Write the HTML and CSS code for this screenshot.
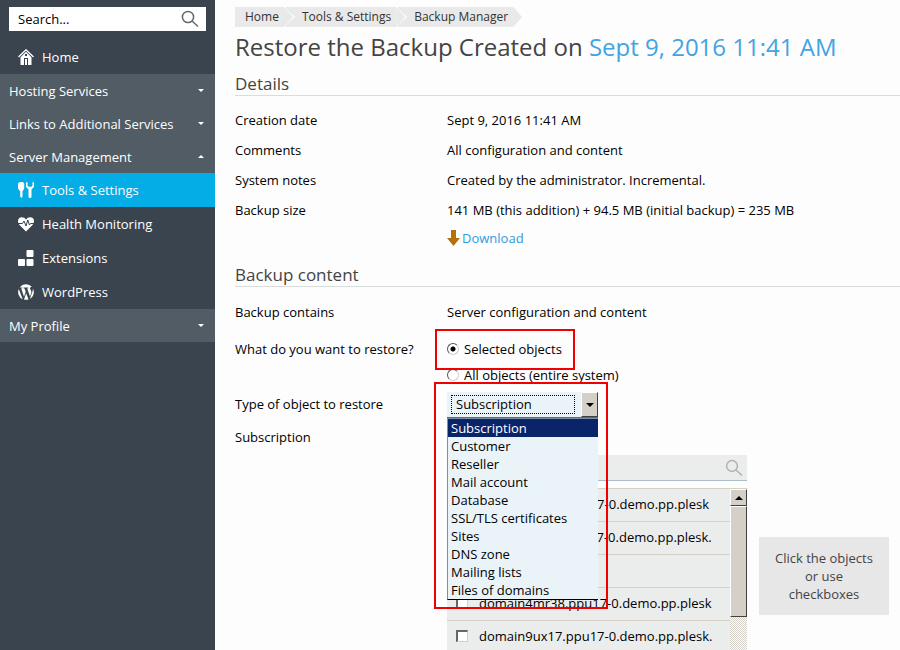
FILE: index.html
```html
<!DOCTYPE html>
<html lang="en">
<head>
    <meta charset="UTF-8">
    <meta name="viewport" content="width=device-width, initial-scale=1.0">
    <title>Restore the Backup</title>
    <link rel="stylesheet" href="styles.css">
</head>
<body>
    <aside class="sidebar">
        <form class="search">
            <input type="text" placeholder="Search..." aria-label="Search">
            <button type="button" aria-label="Find">
                <svg width="18" height="18" viewBox="0 0 18 18"><circle cx="7" cy="7" r="5.6"/><path d="M11 11l6 5.500"/></svg>
            </button>
        </form>
        <nav>
            <a class="item" href="#">
                <svg width="16" height="16" viewBox="0 0 16 16"><path d="M0.500 8L8 0.800 15.500 8" fill="none" stroke="#fff" stroke-width="1.300"/><path fill-rule="evenodd" d="M8 2.800l5.500 5.400V16H10V9H6v7H2.500V8.200zM7 5v2h2V5z"/><path d="M7 10h2v6H7z"/></svg>
                Home
            </a>
            <button class="group" type="button">Hosting Services <span class="caret"></span></button>
            <button class="group" type="button">Links to Additional Services <span class="caret"></span></button>
            <button class="group" type="button">Server Management <span class="caret up"></span></button>
            <a class="item active" href="#">
                <svg width="16" height="16" viewBox="0 0 16 16"><path d="M1.500 0h3.500l1.200 1.500v5L4.800 9h-.3v5.500L3.300 16 2.200 14.500V9h-.4L0 6.500v-5z"/><path d="M8 0.500v4.200L10.500 7.500v7q0 1.500 1.500 1.500t1.500-1.500v-7L16 4.700V0.500L14.500 0v3.800l-1.200 1h-2.600l-1.200-1V0z"/></svg>
                Tools &amp; Settings
            </a>
            <a class="item" href="#">
                <svg width="16" height="16" viewBox="0 0 16 16"><path d="M8 15.500L1.500 9Q0 7.300 0 5.200 0 1.200 4 1.200q2.500 0 4 2.300 1.500-2.300 4-2.300 4 0 4 4 0 2.100-1.500 3.800z"/><path d="M0 7.500h4.500l1.500-2.500 2 5 1.800-6 1.700 5 1-1.500H16" fill="none" stroke="#39444f"/></svg>
                Health Monitoring
            </a>
            <a class="item" href="#">
                <svg width="16" height="16" viewBox="0 0 16 16"><rect x="8.500" width="7" height="7" rx="1"/><rect y="9" width="7" height="7" rx="1"/><rect x="8.500" y="9" width="7" height="7" rx="1"/></svg>
                Extensions
            </a>
            <a class="item" href="#">
                <svg width="16" height="16" viewBox="0 0 16 16"><path d="M1.700 3.500A8 8 0 0 1 14 3h-1q-1.200.3-1 1.500.2 1 1 2 .7 1.300 0 3.300L12 12.500 9.200 4.500l1-.2v-.9H5.500v.9l1 .2 1.200 3.200-1.700 5L3.200 4.500l1-.2v-.8z"/><path d="M0.800 5l3.900 10.300A8 8 0 0 1 0.800 5zM8.200 9.200l2.300 6.300a8 8 0 0 1-4.500 0zM14.900 4.500a8 8 0 0 1-3.100 10.600l2.500-7q.7-2 .6-3.600z"/></svg>
                WordPress
            </a>
            <button class="group" type="button">My Profile <span class="caret"></span></button>
        </nav>
    </aside>

    <main>
        <nav class="breadcrumbs">
            <a href="#">Home</a>
            <a href="#">Tools &amp; Settings</a>
            <a href="#">Backup Manager</a>
        </nav>
        <h1>Restore the Backup Created on <span>Sept 9, 2016 11:41 AM</span></h1>

        <h2>Details</h2>
        <dl class="details">
            <dt>Creation date</dt><dd>Sept 9, 2016 11:41 AM</dd>
            <dt>Comments</dt><dd>All configuration and content</dd>
            <dt>System notes</dt><dd>Created by the administrator. Incremental.</dd>
            <dt>Backup size</dt><dd>141 MB (this addition) + 94.5 MB (initial backup) = 235 MB
                <a class="download" href="#"><svg width="13" height="16" viewBox="0 0 13 16"><path d="M4 0h5v8h4l-6.500 8L0 8h4z"/></svg>Download</a>
            </dd>
        </dl>

        <h2>Backup content</h2>
        <form class="content">
            <div class="row">
                <span class="name">Backup contains</span>
                <span>Server configuration and content</span>
            </div>
            <div class="row restore">
                <span class="name" id="what">What do you want to restore?</span>
                <div class="radios" role="radiogroup" aria-labelledby="what">
                    <label class="marked"><input type="radio" name="objects" checked> Selected objects</label>
                    <label><input type="radio" name="objects"> All objects (entire system)</label>
                </div>
            </div>
            <div class="row type">
                <label class="name" for="type">Type of object to restore</label>
                <div class="combo">
                    <select id="type"><option>Subscription</option></select>
                    <span class="arrow"></span>
                    <ul class="options" role="listbox" aria-label="Object types">
                        <li role="option" aria-selected="true">Subscription</li>
                        <li role="option">Customer</li>
                        <li role="option">Reseller</li>
                        <li role="option">Mail account</li>
                        <li role="option">Database</li>
                        <li role="option">SSL/TLS certificates</li>
                        <li role="option">Sites</li>
                        <li role="option">DNS zone</li>
                        <li role="option">Mailing lists</li>
                        <li role="option">Files of domains</li>
                    </ul>
                    <div class="frame"></div>
                </div>
            </div>
            <div class="row subscription">
                <span class="name">Subscription</span>
                <div class="picker">
                    <div class="objects">
                        <div class="filter">
                            <input type="text" aria-label="Filter subscriptions">
                            <svg width="18" height="18" viewBox="0 0 18 18"><circle cx="7" cy="7" r="5.400"/><path d="M11 11l6 5.500"/></svg>
                        </div>
                        <div class="list">
                            <ul>
                                <li><label><input type="checkbox"> domain2kd45.ppu17-0.demo.pp.plesk</label></li>
                                <li><label><input type="checkbox"> domain3hs61.ppu17-0.demo.pp.plesk.</label></li>
                                <li><input type="checkbox" aria-label="Domain"></li>
                                <li><label><input type="checkbox"> domain4mr38.ppu17-0.demo.pp.plesk</label></li>
                                <li><label><input type="checkbox"> domain9ux17.ppu17-0.demo.pp.plesk.</label></li>
                            </ul>
                            <div class="scrollbar">
                                <button type="button" aria-label="Scroll up"></button>
                                <div class="thumb"></div>
                            </div>
                        </div>
                    </div>
                    <p class="hint">Click the objects or use checkboxes</p>
                </div>
            </div>
        </form>
    </main>
</body>
</html>
```

FILE: styles.css
```css
* {
    box-sizing: border-box;
}
body {
    display: flex;
    height: 100vh;
    margin: 0;
    overflow: hidden;
    background-color: #fdfdfd;
    color: #000;
    font-family: "Open Sans", "Noto Sans", sans-serif;
    font-size: 13px;
    line-height: 18px;
}
a {
    text-decoration: none;
}
ul, dl, dd, p {
    margin: 0;
    padding: 0;
}
ul {
    list-style: none;
}
input, select, button {
    margin: 0;
    border: none;
    border-radius: 0;
    background: none;
    color: inherit;
    font: inherit;
}

/* sidebar */
.sidebar {
    flex: 0 0 215px;
    min-width: 0;
    padding-top: 7px;
    background-color: #39444f;
    color: #fff;
}
.search {
    display: flex;
    align-items: center;
    height: 24px;
    margin: 0 9px 9px;
    background-color: #fff;
}
.search input {
    flex: 1;
    min-width: 0;
    padding: 0 9px;
    color: #000;
}
.search input::placeholder {
    color: #000;
    opacity: 1;
}
.search button {
    display: flex;
    padding: 0 7px;
}
.search svg, .filter svg {
    fill: none;
    stroke: #666;
    stroke-width: 1.5;
}
.item {
    display: flex;
    align-items: center;
    gap: 8px;
    height: 34px;
    padding-left: 18px;
    color: #fff;
}
.item svg {
    fill: #fff;
}
.active {
    background-color: #04ade6;
}
.group {
    display: flex;
    align-items: center;
    justify-content: space-between;
    width: 100%;
    height: 33px;
    padding: 0 11px 0 9px;
    background-color: #525c64;
}
.caret {
    border: 3px solid transparent;
    border-top-color: #fff;
    border-bottom: none;
}
.caret.up {
    border-top: none;
    border-bottom: 3px solid #fff;
}

/* page */
main {
    flex: 1;
    min-width: 0;
    padding: 7px 0 0 20px;
    overflow: hidden;
}
.breadcrumbs {
    display: flex;
    gap: 2px;
    font-size: 12px;
    line-height: 20px;
}
.breadcrumbs a {
    position: relative;
    padding: 0 5px 0 16px;
    background-color: #e9e9e9;
    color: #333;
}
.breadcrumbs a:first-child {
    padding-left: 10px;
}
.breadcrumbs a::before, .breadcrumbs a::after {
    content: "";
    position: absolute;
    z-index: 1;
    top: 0;
    left: 100%;
    width: 11px;
    height: 20px;
    background-color: #fdfdfd;
    clip-path: polygon(0 0, 100% 50%, 0 100%);
}
.breadcrumbs a::after {
    width: 9px;
    background-color: #e9e9e9;
}
h1, h2 {
    margin: 0;
    color: #444;
    font-weight: 400;
}
h1 {
    margin-top: 3px;
    font-size: 24px;
    line-height: 34px;
    white-space: nowrap;
}
h1 span {
    color: #42a4e2;
}
h2 {
    margin-top: 8px;
    border-bottom: 1px solid #d9dcdd;
    font-size: 17px;
    line-height: 23px;
}
.details {
    display: grid;
    grid-template-columns: 212px 1fr;
    row-gap: 12px;
    padding-top: 15px;
}
.download {
    display: flex;
    align-items: center;
    gap: 2px;
    margin-top: 10px;
    color: #2f9bdc;
}
.download svg {
    fill: #b5700c;
}
.details + h2 {
    margin-top: 16px;
}
.row {
    display: flex;
    padding-top: 16px;
}
.name {
    flex: 0 0 212px;
}
.restore {
    padding-top: 19px;
}
.radios {
    display: flex;
    flex-direction: column;
    align-items: flex-start;
    gap: 8px;
}
.radios label {
    display: flex;
    align-items: center;
    gap: 5px;
}
.radios input {
    appearance: none;
    width: 12px;
    height: 12px;
    border: 1px solid;
    border-color: #555 #d4d0c8 #d4d0c8 #555;
    border-radius: 50%;
    background-color: #fff;
}
.radios input:checked {
    background-image: radial-gradient(#000 2px, transparent 3px);
}
.marked {
    position: relative;
}
.marked::after {
    content: "";
    position: absolute;
    inset: -11px -13px -12px -12px;
    border: 2px solid #f00000;
}
.type {
    padding-top: 8px;
}
.type .name {
    padding-top: 3px;
}
.combo {
    position: relative;
    display: flex;
    width: 151px;
    height: 26px;
    border-bottom: 1px solid #2a7ab0;
    background-color: #eaf4f8;
}
.combo select {
    appearance: none;
    flex: 1;
    height: 19px;
    margin: 3px 6px 3px 4px;
    padding: 0 4px;
    border: 1px dotted #000;
    line-height: 17px;
}
.arrow {
    display: flex;
    align-items: center;
    justify-content: center;
    width: 17px;
    border: 1px solid;
    border-color: #fff #404040 #404040 #fff;
    background-color: #d4d0c8;
}
.arrow::before {
    content: "";
    border: 4px solid transparent;
    border-top-color: #000;
    border-bottom: none;
}
.options {
    position: absolute;
    z-index: 2;
    top: 26px;
    left: 0;
    width: 100%;
    border: 1px solid #000;
    border-width: 1px 0 1px 1px;
    border-top-color: #7d8fa3;
    border-left-color: #7d8fa3;
    background-color: #eaf4f8;
}
.options li {
    padding-left: 3px;
}
.options [aria-selected] {
    background-color: #0a246a;
    color: #fff;
}
.frame {
    position: absolute;
    z-index: 3;
    inset: -10px -10px -192px -13px;
    border: 2px solid #f00000;
}
.subscription {
    padding-top: 10px;
}
.picker {
    display: flex;
    align-items: center;
    gap: 12px;
    margin-top: 27px;
}
.objects {
    flex: 0 0 300px;
}
.filter {
    display: flex;
    align-items: center;
    height: 26px;
    padding-right: 4px;
    border-bottom: 1px solid #adbccb;
    background-color: #ebeded;
}
.filter input {
    flex: 1;
    min-width: 0;
}
.filter svg {
    stroke: #b0b0b0;
}
.list {
    display: flex;
    height: 208px;
    margin-top: 7px;
    border-top: 1px solid #d4d0c8;
    background-color: #ebeded;
}
.list ul {
    flex: 1;
}
.list li, .list label {
    display: flex;
    align-items: center;
}
.list li {
    height: 33px;
    padding: 0 0 3px 9px;
    border-bottom: 1px solid #d4d0c8;
}
.list label {
    gap: 11px;
}
.list input {
    appearance: none;
    width: 12px;
    height: 12px;
    border: 1px solid #d4d0c8;
    border-top: 2px solid #666;
    border-left: 2px solid #666;
    background-color: #fff;
}
.scrollbar {
    width: 17px;
    background: conic-gradient(#d4d0c8 25%, #fff 25% 50%, #d4d0c8 50% 75%, #fff 75%) 0 0 / 2px 2px;
}
.scrollbar button, .thumb {
    width: 100%;
    border: 1px solid;
    border-color: #fff #404040 #404040 #fff;
    background-color: #d4d0c8;
}
.scrollbar button {
    display: flex;
    align-items: center;
    justify-content: center;
    height: 17px;
    padding: 0;
}
.scrollbar button::before {
    content: "";
    border: 4px solid transparent;
    border-top: none;
    border-bottom-color: #000;
}
.thumb {
    height: 111px;
}
.hint {
    width: 130px;
    padding: 12px 16px;
    background-color: #e7e7e7;
    color: #444;
    text-align: center;
}
```
